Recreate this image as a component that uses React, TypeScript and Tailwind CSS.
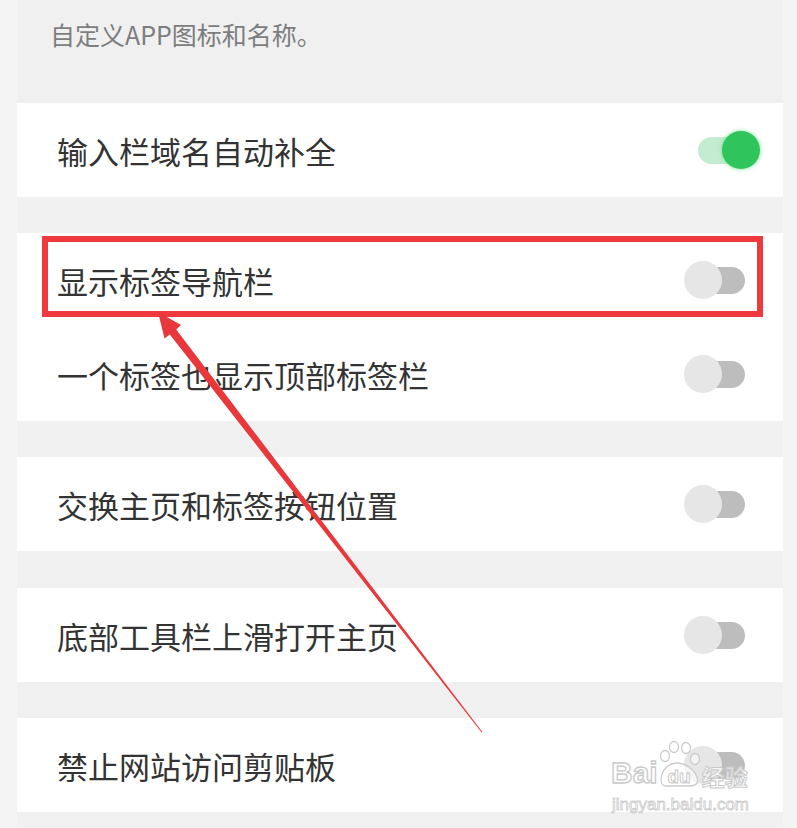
import React from "react";

const FONT = { fontFamily: '"Noto Sans CJK SC", "Noto Sans", sans-serif' };
const LATIN = { fontFamily: '"Liberation Sans", Arial, sans-serif' };

function Toggle({ on }: { on: boolean }) {
  return (
    <div className="w-[76px] h-[40px] shrink-0 flex items-center">
      <div
        className={
          "ml-[14px] w-[47px] h-[27px] rounded-full flex items-center " +
          (on ? "bg-[#c4ecd0]" : "bg-[#bdbdbd]")
        }
      >
        {on ? (
          <div className="ml-[24px] w-[38px] h-[38px] shrink-0 rounded-full bg-[#2fc45c] shadow-[0_0_4px_rgba(60,220,110,0.7)]" />
        ) : (
          <div className="-ml-[14px] w-[38px] h-[38px] shrink-0 rounded-full bg-[#e6e6e6]" />
        )}
      </div>
    </div>
  );
}

function Row({ label, on = false }: { label: string; on?: boolean }) {
  return (
    <div className="h-[94px] flex items-center justify-between pl-[40px] pr-[23px]">
      <span className="text-[31px] leading-none text-[#333333]" style={FONT}>
        {label}
      </span>
      <Toggle on={on} />
    </div>
  );
}

function Watermark() {
  return (
    <div className="absolute left-[608px] top-[738px] w-[150px] flex flex-col pointer-events-none">
      <div className="flex items-end h-[50px]">
        <span
          className="ml-[3px] text-[30px] font-bold leading-none text-white/60 [-webkit-text-stroke:1.3px_#c9c9c9]"
          style={LATIN}
        >
          Bai
        </span>
        <svg width="44" height="50" viewBox="0 0 44 50" className="shrink-0">
          <g fill="rgba(255,255,255,0.55)" stroke="#cbcbcb" strokeWidth="1.3">
            <ellipse cx="7" cy="18" rx="4.5" ry="5.5" />
            <ellipse cx="16" cy="9" rx="4.5" ry="5.5" />
            <ellipse cx="28" cy="10" rx="4.5" ry="5.5" />
            <ellipse cx="37" cy="21" rx="4.5" ry="5.5" />
            <path d="M3 42 C3 32 11 25 19 25 C27 25 36 31 39 39 C41 45 38 48 32 48 L9 48 C4 48 3 46 3 42 Z" />
          </g>
          <text
            x="21"
            y="45"
            textAnchor="middle"
            fontSize="19"
            fontWeight="bold"
            fill="rgba(255,255,255,0.6)"
            stroke="#c9c9c9"
            strokeWidth="1"
            style={LATIN}
          >
            du
          </text>
        </svg>
        <span
          className="text-[23px] font-bold leading-none text-white/60 [-webkit-text-stroke:1px_#c9c9c9]"
          style={FONT}
        >
          经验
        </span>
      </div>
      <span
        className="ml-[4px] mt-[8px] text-[17px] leading-none text-white/60 [-webkit-text-stroke:0.8px_#c9c9c9]"
        style={LATIN}
      >
        jingyan.baidu.com
      </span>
    </div>
  );
}

export default function App() {
  return (
    <div className="relative w-[797px] h-[828px] overflow-hidden bg-[#f4f4f4] pl-[17px] pr-[14px]">
      <div className="h-full bg-[#f0f0f0]">
        <div className="h-[103px] pl-[33px] pt-[22px]">
          <span className="text-[25px] leading-[25px] text-[#7d7d7d]" style={FONT}>
            自定义APP图标和名称。
          </span>
        </div>
        <div className="flex flex-col gap-[36px]">
          <div className="bg-white">
            <Row label="输入栏域名自动补全" on />
          </div>
          <div className="bg-white">
            <Row label="显示标签导航栏" />
            <Row label="一个标签也显示顶部标签栏" />
          </div>
          <div className="bg-white">
            <Row label="交换主页和标签按钮位置" />
          </div>
          <div className="bg-white mt-[1px]">
            <Row label="底部工具栏上滑打开主页" />
          </div>
          <div className="bg-white">
            <Row label="禁止网站访问剪贴板" />
          </div>
        </div>
      </div>

      {/* red highlight box */}
      <div className="absolute left-[42px] top-[236px] w-[721px] h-[81px] border-[6px] border-[#ee3a3e] pointer-events-none" />

      {/* arrow */}
      <svg
        className="absolute left-0 top-0 pointer-events-none"
        width="797"
        height="828"
        viewBox="0 0 797 828"
      >
        <polygon
          fill="#e8383b"
          points="158,312 181,325 176.2,329.6 482.4,732 481.6,732.4 169.8,334.4 164.5,338.5"
        />
      </svg>

      <Watermark />
    </div>
  );
}
